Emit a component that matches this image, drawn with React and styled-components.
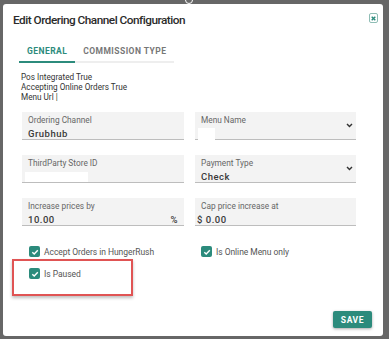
import React from "react";
import styled, { createGlobalStyle } from "styled-components";

const Global = createGlobalStyle`
  html, body { margin: 0; padding: 0; }
  body { background: #676767; font-family: Roboto, "Noto Sans", Arial, sans-serif; }
  * { box-sizing: border-box; }
`;

const teal = "#2c8b7c";

const Backdrop = styled.div`
  width: 389px;
  height: 339px;
  padding: 4px 6px 3px 3px;
  position: relative;
  overflow: hidden;
`;

const Knob = styled.div`
  position: absolute;
  left: 185px;
  top: -4px;
  width: 8px;
  height: 8px;
  border-radius: 50%;
  border: 1.5px solid #fff;
  background: #6a6a6a;
`;

const Modal = styled.div`
  position: relative;
  width: 380px;
  height: 332px;
  background: #fff;
  border-radius: 3px;
  display: flex;
  flex-direction: column;
`;

const Header = styled.div`
  display: flex;
  justify-content: space-between;
  align-items: flex-start;
  padding: 7px 5px 0 10px;
`;

const Title = styled.h1`
  margin: 0;
  font-size: 11.8px;
  line-height: 18px;
  font-weight: 500;
  letter-spacing: -0.5px;
  color: #2b2b2b;
`;

const Close = styled.button`
  margin-top: 2px;
  width: 9px;
  height: 10px;
  padding: 0;
  border: 1px solid #8fbdb5;
  border-radius: 2px;
  background: #fff;
  display: flex;
  align-items: center;
  justify-content: center;
`;

const Tabs = styled.div`
  display: flex;
  align-self: flex-start;
  margin: 12px 0 0 16px;
  border-bottom: 2px solid #eeeeee;
`;

const Tab = styled.div`
  height: 22px;
  padding: 0 8px;
  display: flex;
  align-items: center;
  white-space: nowrap;
  font-size: 8.5px;
  font-weight: 700;
  letter-spacing: 0.45px;
  color: ${(p) => (p.$active ? teal : "#777")};
  margin-bottom: -2px;
  border-bottom: 2px solid ${(p) => (p.$active ? teal : "transparent")};
`;

const Info = styled.div`
  margin: 9px 0 0 18px;
  font-size: 8.2px;
  line-height: 10px;
  color: #333;
`;

const Grid = styled.div`
  margin: 10px 0 0 19px;
  width: 334px;
  display: grid;
  grid-template-columns: 162px 161px;
  column-gap: 11px;
  row-gap: 15px;
`;

const Field = styled.div`
  position: relative;
  height: 28px;
  background: #f3f3f3;
  border-bottom: 1px solid #bdbdbd;
  padding: 3px 6px 0 6px;
  display: flex;
  flex-direction: column;
`;

const Label = styled.div`
  font-size: 8.3px;
  line-height: 10px;
  color: #666;
`;

const ValueRow = styled.div`
  display: flex;
  align-items: center;
  justify-content: space-between;
  margin-top: 3px;
  height: 11px;
`;

const Value = styled.span`
  font-size: 9.5px;
  font-weight: 500;
  letter-spacing: 0.5px;
  color: #3a3a3a;
  margin-left: ${(p) => (p.$flush ? "-4px" : "0")};
`;

const Redact = styled.span`
  display: block;
  background: #fff;
  width: ${(p) => p.$w}px;
  height: ${(p) => p.$h}px;
  margin-left: ${(p) => p.$ml || 0}px;
`;

const Chevron = styled.svg`
  position: absolute;
  right: 3px;
  top: 11px;
`;

const Checks = styled.div`
  margin: 20px 0 0 26px;
  display: grid;
  grid-template-columns: 172px 1fr;
  row-gap: 11px;
`;

const CheckItem = styled.label`
  display: flex;
  align-items: center;
  gap: 4px;
  font-size: 8.5px;
  letter-spacing: -0.05px;
  color: #555;
`;

const Box = styled.span`
  width: 11px;
  height: 11px;
  border-radius: 2px;
  background: ${teal};
  display: flex;
  align-items: center;
  justify-content: center;
`;

const Highlight = styled.div`
  position: absolute;
  left: 9px;
  top: 255px;
  width: 121px;
  height: 37px;
  border: 2px solid #e05454;
  box-shadow: 0 2px 3px rgba(0, 0, 0, 0.25);
`;

const Footer = styled.div`
  margin-top: auto;
  display: flex;
  justify-content: flex-end;
  padding: 0 11px 8px 0;
`;

const Save = styled.button`
  width: 39px;
  height: 17px;
  border: none;
  border-radius: 2px;
  background: ${teal};
  color: #fff;
  font-family: Roboto, sans-serif;
  font-size: 8.5px;
  font-weight: 700;
  letter-spacing: 0.6px;
  padding: 0;
  box-shadow: 0 1px 3px rgba(0, 0, 0, 0.35);
`;

const Check = ({ label }) => (
  <CheckItem>
    <Box>
      <svg width="8" height="8" viewBox="0 0 8 8">
        <path d="M1.3 4.2 L3.2 6 L6.8 2.2" fill="none" stroke="#fff" strokeWidth="1.4" />
      </svg>
    </Box>
    {label}
  </CheckItem>
);

const Down = () => (
  <Chevron width="7" height="5" viewBox="0 0 7 5">
    <path d="M1 1 L3.5 3.6 L6 1" fill="none" stroke="#333" strokeWidth="1.4" />
  </Chevron>
);

export default function App() {
  return (
    <>
      <Global />
      <Backdrop>
        <Knob />
        <Modal>
          <Header>
            <Title>Edit Ordering Channel Configuration</Title>
            <Close aria-label="close">
              <svg width="5" height="5" viewBox="0 0 5 5">
                <path d="M0.7 0.7 L4.3 4.3 M4.3 0.7 L0.7 4.3" stroke={teal} strokeWidth="1.4" />
              </svg>
            </Close>
          </Header>
          <Tabs>
            <Tab $active>GENERAL</Tab>
            <Tab>COMMISSION TYPE</Tab>
          </Tabs>
          <Info>
            <div>Pos Integrated True</div>
            <div>Accepting Online Orders True</div>
            <div>Menu Url |</div>
          </Info>
          <Grid>
            <Field>
              <Label>Ordering Channel</Label>
              <ValueRow><Value>Grubhub</Value></ValueRow>
            </Field>
            <Field>
              <Label>Menu Name</Label>
              <ValueRow><Redact $w={17} $h={12} $ml={-3} /></ValueRow>
              <Down />
            </Field>
            <Field>
              <Label>ThirdParty Store ID</Label>
              <ValueRow><Redact $w={63} $h={10} $ml={-3} /></ValueRow>
            </Field>
            <Field>
              <Label>Payment Type</Label>
              <ValueRow><Value>Check</Value></ValueRow>
              <Down />
            </Field>
            <Field>
              <Label>Increase prices by</Label>
              <ValueRow><Value>10.00</Value><Value>%</Value></ValueRow>
            </Field>
            <Field>
              <Label>Cap price increase at</Label>
              <ValueRow><Value $flush>$ 0.00</Value></ValueRow>
            </Field>
          </Grid>
          <Checks>
            <Check label="Accept Orders in HungerRush" />
            <Check label="Is Online Menu only" />
            <Check label="Is Paused" />
          </Checks>
          <Highlight />
          <Footer>
            <Save>SAVE</Save>
          </Footer>
        </Modal>
      </Backdrop>
    </>
  );
}
